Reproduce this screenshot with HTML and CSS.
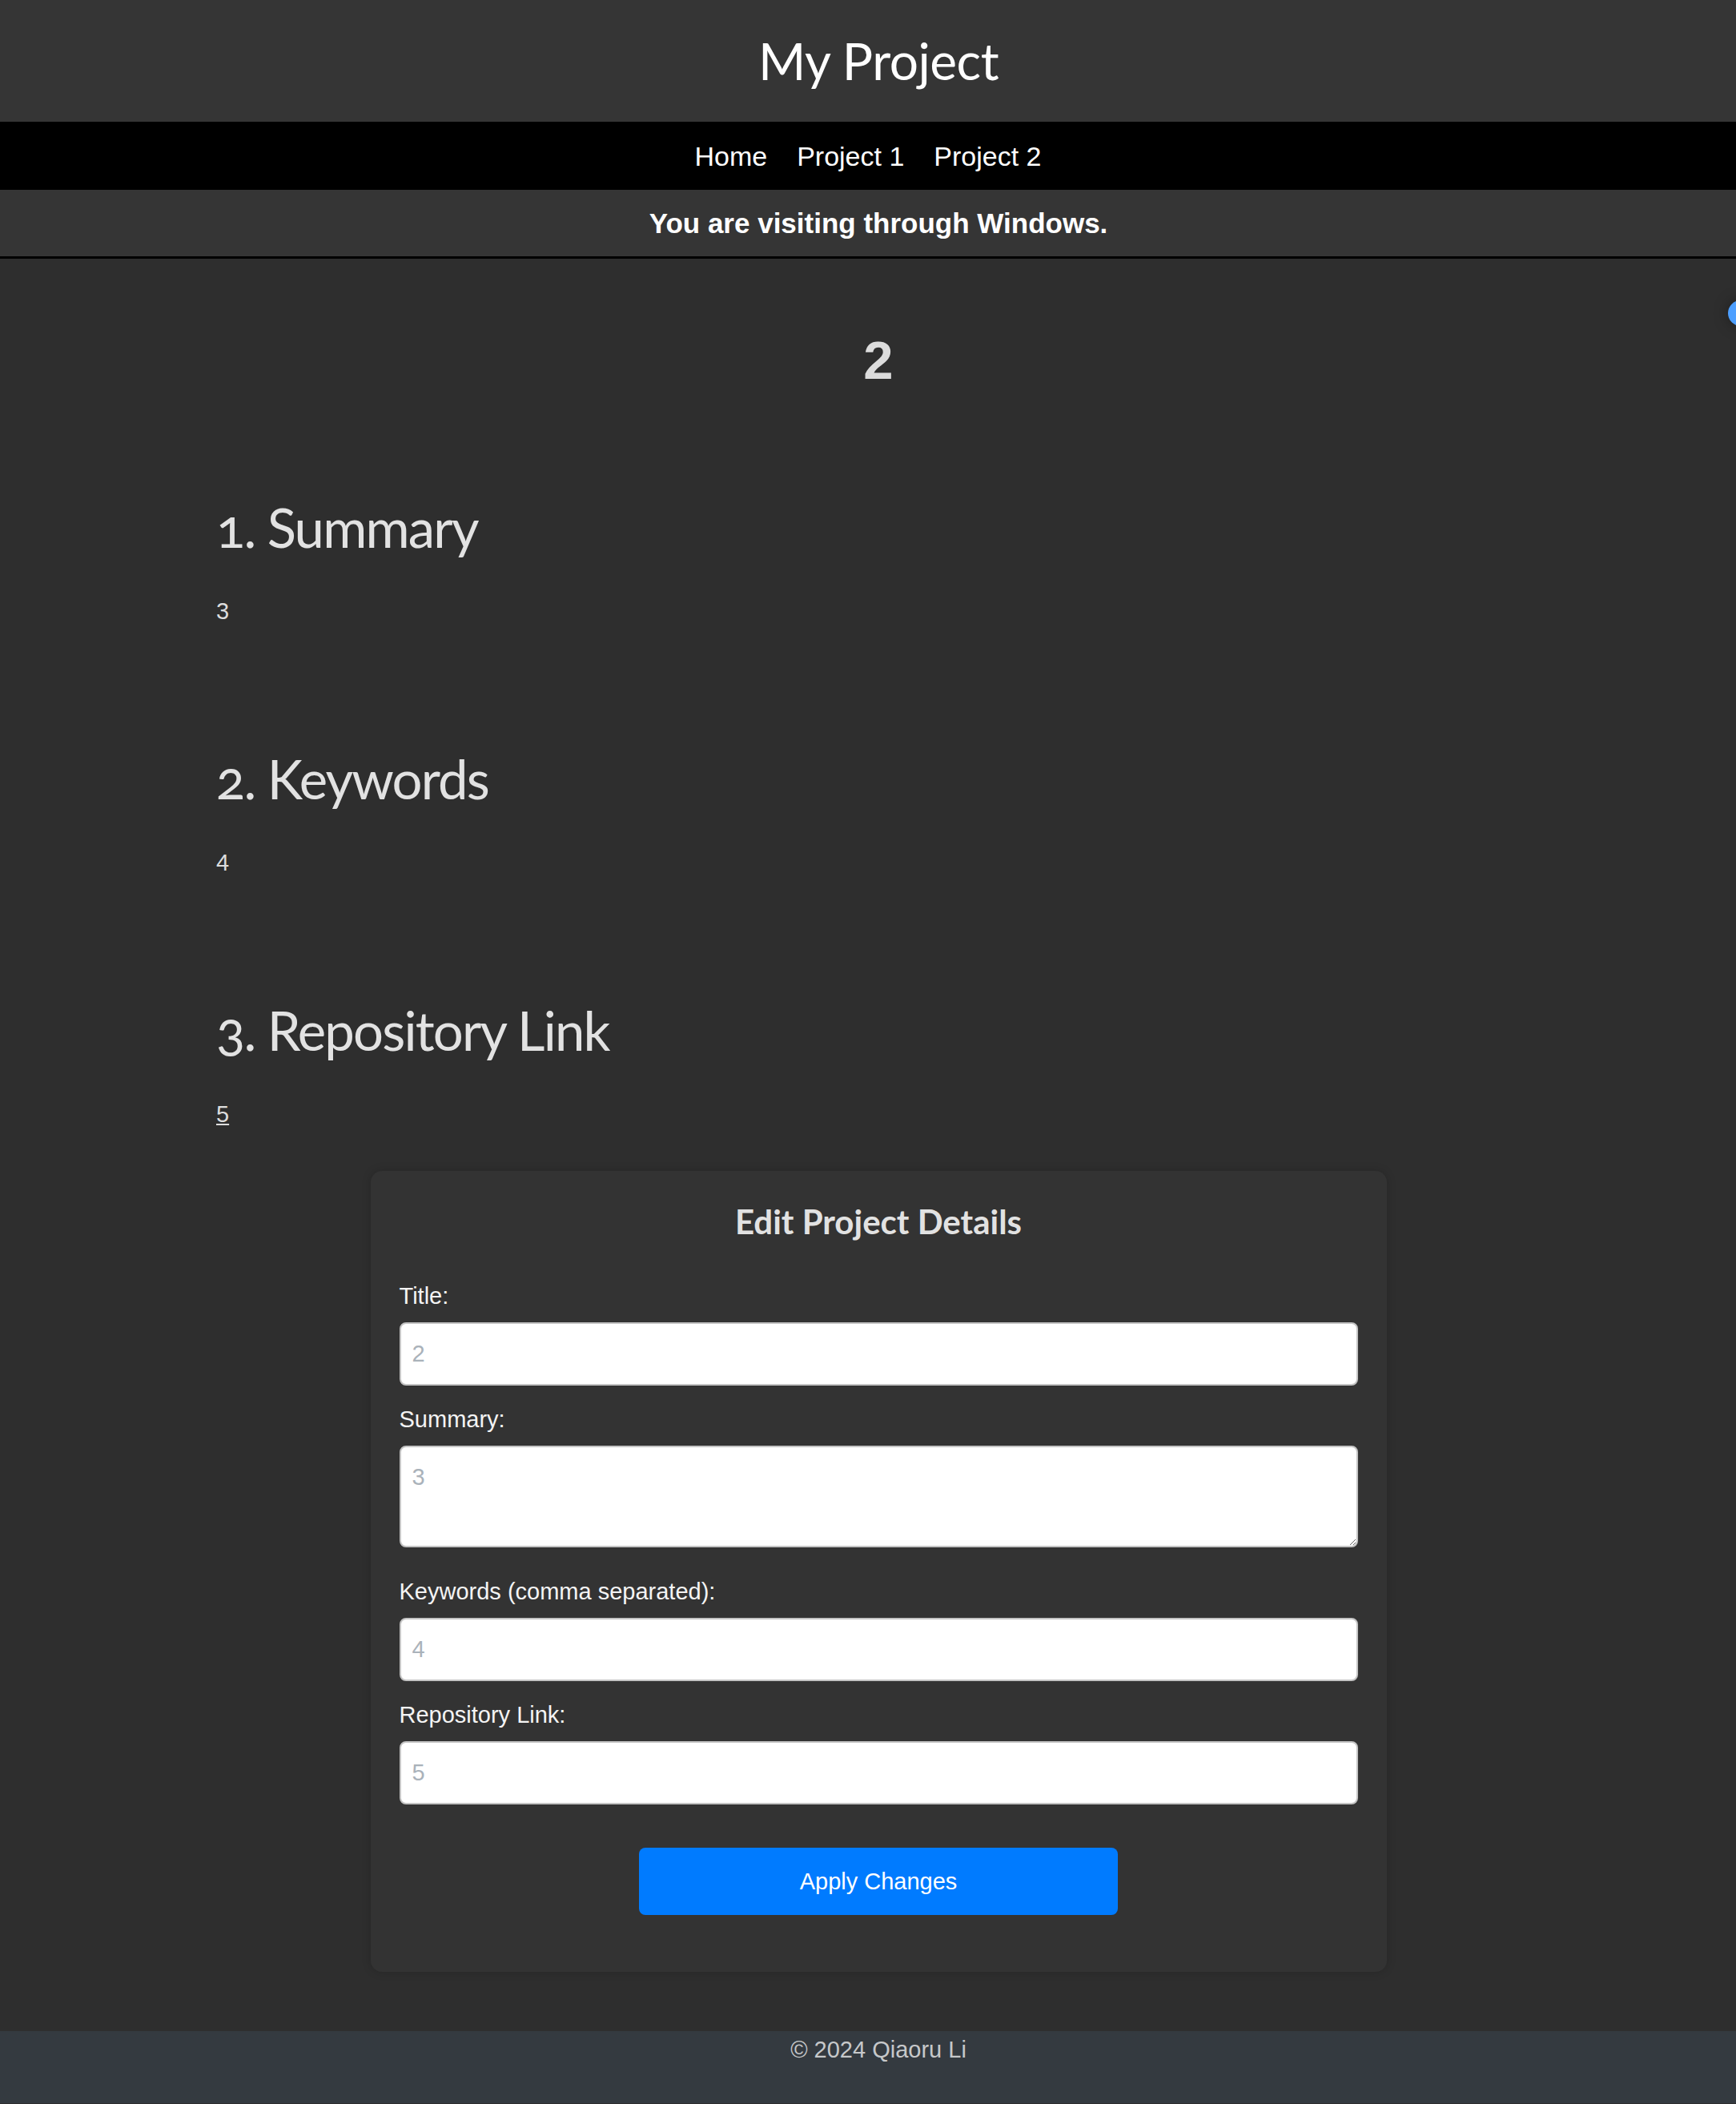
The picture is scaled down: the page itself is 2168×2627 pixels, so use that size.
FILE: index.html
```html
<!DOCTYPE html>
<html lang="en">
<head>
<meta charset="utf-8">
<title>My Project</title>
<link rel="stylesheet" href="styles.css">
</head>
<body>
<div class="page">
  <header class="site-header">
    <h1 class="site-title">My Project</h1>
  </header>
  <nav class="site-nav">
    <a href="#">Home</a>
    <a href="#">Project 1</a>
    <a href="#">Project 2</a>
  </nav>
  <div class="os-bar">You are visiting through Windows.</div>

  <main class="content">
    <h1 class="project-title">2</h1>

    <section class="detail">
      <h2 class="detail-heading">1. Summary</h2>
      <p class="detail-text">3</p>
    </section>

    <section class="detail">
      <h2 class="detail-heading">2. Keywords</h2>
      <p class="detail-text">4</p>
    </section>

    <section class="detail">
      <h2 class="detail-heading">3. Repository Link</h2>
      <p class="detail-text"><a class="repo-link" href="#">5</a></p>
    </section>

    <form class="edit-card">
      <h3 class="edit-title">Edit Project Details</h3>
      <label class="field-label" for="title">Title:</label>
      <input class="field-input" id="title" type="text" placeholder="2">
      <label class="field-label" for="summary">Summary:</label>
      <textarea class="field-input field-area" id="summary" placeholder="3"></textarea>
      <label class="field-label" for="keywords">Keywords (comma separated):</label>
      <input class="field-input" id="keywords" type="text" placeholder="4">
      <label class="field-label" for="repo">Repository Link:</label>
      <input class="field-input field-last" id="repo" type="text" placeholder="5">
      <button class="apply-btn" type="button">Apply Changes</button>
    </form>
  </main>

  <footer class="site-footer">© 2024 Qiaoru Li</footer>

  <span class="float-dot"></span>
</div>
</body>
</html>
```

FILE: styles.css
```css
* {
  box-sizing: border-box;
}

html,
body {
  margin: 0;
  padding: 0;
  overflow-x: hidden;
  background: #2e2e2e;
}

body {
  font-family: "Liberation Sans", Arial, sans-serif;
  color: #e0e0e0;
}

.page {
  position: relative;
  width: 2194px;
}

/* Header */
.site-header {
  height: 152px;
  background: #353535;
  display: flex;
  align-items: center;
  justify-content: center;
}

.site-title {
  margin: 0;
  font-family: Lato, "Open Sans", sans-serif;
  font-weight: 400;
  font-size: 64px;
  line-height: 64px;
  letter-spacing: -0.5px;
  color: #ffffff;
}

.site-nav {
  height: 85px;
  background: #000000;
  display: flex;
  align-items: center;
  justify-content: center;
  gap: 37px;
  padding-right: 26px;
}

.site-nav a {
  color: #ffffff;
  text-decoration: none;
  font-size: 34px;
  line-height: 36px;
}

.os-bar {
  height: 86px;
  background: #353535;
  border-bottom: 3px solid #000000;
  display: flex;
  align-items: center;
  justify-content: center;
  font-weight: 700;
  font-size: 35px;
  color: #ffffff;
}

/* Main content */
.content {
  padding: 88px 270px 0;
}

.project-title {
  margin: 0 0 129px;
  text-align: center;
  font-size: 67px;
  line-height: 77px;
  font-weight: 700;
  color: #dcdcdc;
}

.detail + .detail {
  margin-top: 152px;
}

.detail-heading {
  margin: 0;
  font-family: Lato, "Open Sans", sans-serif;
  font-weight: 400;
  font-size: 67px;
  line-height: 82px;
  color: #e2e2e2;
  letter-spacing: -1.8px;
  font-variant-numeric: oldstyle-nums;
}

.detail-text {
  margin: 48px 0 0;
  font-size: 29px;
  line-height: 32px;
  color: #dddddd;
}

.repo-link {
  color: #dddddd;
  text-decoration: underline;
}

/* Edit card */
.edit-card {
  width: 1269px;
  margin: 55px auto 0;
  padding: 38px 36px 36px;
  background: #333333;
  border-radius: 14px;
  box-shadow: 0 0 12px rgba(0, 0, 0, 0.18);
}

.edit-title {
  margin: 0 0 52px;
  text-align: center;
  font-family: Lato, "Open Sans", sans-serif;
  font-weight: 700;
  font-size: 42px;
  line-height: 50px;
  color: #e2e2e2;
}

.field-label {
  display: block;
  margin-bottom: 17px;
  font-size: 29px;
  line-height: 32px;
  color: #f4f4f4;
}

.field-input {
  display: block;
  width: 100%;
  height: 79px;
  margin: 0 0 26px;
  padding: 0 14px;
  border: 2px solid #c4c4c4;
  border-radius: 8px;
  background: #ffffff;
  font-family: "Liberation Sans", Arial, sans-serif;
  font-size: 29px;
  color: #222222;
}

.field-area {
  height: 127px;
  padding: 21px 14px;
  margin-bottom: 39px;
  line-height: 32px;
  resize: vertical;
}

.field-last {
  margin-bottom: 0;
}

.field-input::placeholder {
  color: #aab2ba;
}

.apply-btn {
  display: block;
  width: 50%;
  height: 84px;
  margin: 54px auto 35px;
  border: none;
  border-radius: 8px;
  background: #007bff;
  color: #ffffff;
  font-family: "Liberation Sans", Arial, sans-serif;
  font-size: 29px;
}

/* Footer */
.site-footer {
  margin-top: 74px;
  padding: 7px 0 51px;
  background: #343a40;
  text-align: center;
  font-size: 29px;
  line-height: 32px;
  color: #c6c8ca;
}

/* Floating dot at the right edge */
.float-dot {
  position: absolute;
  left: 2158px;
  top: 375px;
  width: 32px;
  height: 32px;
  border-radius: 50%;
  background: #4d9fff;
  box-shadow: 0 0 18px rgba(0, 0, 0, 0.35);
}
```
